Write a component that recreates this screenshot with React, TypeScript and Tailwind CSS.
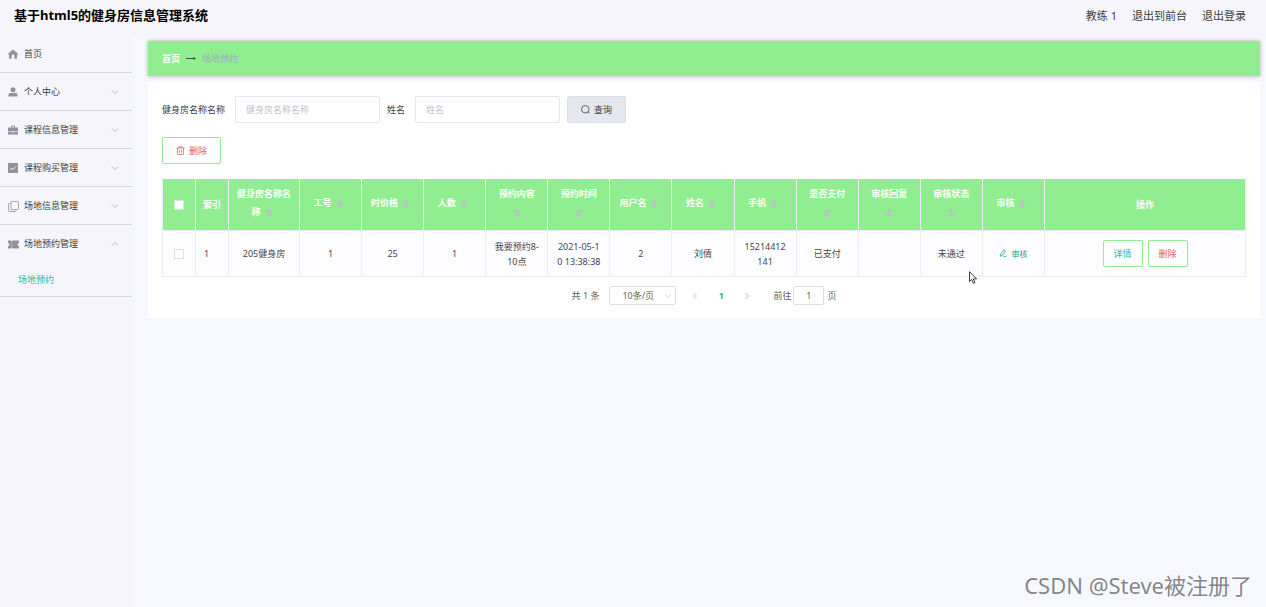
import type { ReactNode } from "react";

const menu = [
  { label: "首页", icon: <HomeIcon /> },
  { label: "个人中心", icon: <UserIcon />, arrow: "down" },
  { label: "课程信息管理", icon: <CaseIcon />, arrow: "down" },
  { label: "课程购买管理", icon: <ChartIcon />, arrow: "down" },
  { label: "场地信息管理", icon: <CopyIcon />, arrow: "down" },
  {
    label: "场地预约管理",
    icon: <TicketIcon />,
    arrow: "up",
    children: ["场地预约"],
  },
];

const columns = [
  "工号",
  "时价格",
  "人数",
  "预约内容",
  "预约时间",
  "用户名",
  "姓名",
  "手机",
  "是否支付",
  "审核回复",
  "审核状态",
  "审核",
];

const row = [
  "1",
  "25",
  "1",
  "我要预约8-10点",
  "2021-05-10 13:38:38",
  "2",
  "刘倩",
  "15214412141",
  "已支付",
  "",
  "未通过",
];

function HomeIcon() {
  return (
    <svg className="size-[10px]" viewBox="0 0 20 20" fill="currentColor">
      <path d="M10 1 0 9.500c0 1 .5 1.500 1.500 1.500H2v7.500c0 .6.4 1 1 1h4V14a3 3 0 0 1 6 0v5.500h4c.6 0 1-.4 1-1V11h.5c1 0 1.500-.5 1.500-1.500z" />
    </svg>
  );
}

function UserIcon() {
  return (
    <svg className="size-[10px]" viewBox="0 0 20 20" fill="currentColor">
      <circle cx="10" cy="5.500" r="5" />
      <path d="M1 19v-3.500c0-2.500 2-3.500 4-3.500h10c2 0 4 1 4 3.500V19z" />
    </svg>
  );
}

function CaseIcon() {
  return (
    <svg className="size-[10px]" viewBox="0 0 20 20" fill="currentColor">
      <path d="M6 5V3.500C6 2 7 1 8.500 1h3C13 1 14 2 14 3.500V5h6v7.500H0V5zm2 0h4V3H8z" />
      <path d="M0 13.500h8V15h4v-1.500h8V19H0z" />
    </svg>
  );
}

function ChartIcon() {
  return (
    <svg className="size-[10px]" viewBox="0 0 20 20">
      <rect width="20" height="20" rx="1" fill="currentColor" />
      <path d="m4 14 4-4 3 2.500L16 7" fill="none" stroke="#f5f5fb" strokeWidth="1.800" />
    </svg>
  );
}

function CopyIcon() {
  return (
    <svg
      className="size-[11px]"
      viewBox="0 0 22 22"
      fill="none"
      stroke="currentColor"
      strokeWidth="1.600"
    >
      <rect x="6" y="1" width="15" height="16" rx="2" />
      <path d="M6 5H3a2 2 0 0 0-2 2v12a2 2 0 0 0 2 2h11a2 2 0 0 0 2-2v-2" />
    </svg>
  );
}

function TicketIcon() {
  return (
    <svg className="h-[9px] w-[11px]" viewBox="0 0 22 18" fill="currentColor">
      <path d="M0 1h6l1.500 2L9 1h13v5a3 3 0 0 0 0 6v5H9l-1.500-2L6 17H0v-5a3 3 0 0 0 0-6z" />
      <path d="M7.500 5v2.500M7.500 10.500V13" stroke="#f5f5fb" strokeWidth="1.400" />
    </svg>
  );
}

function Chevron({ className }: { className: string }) {
  return (
    <svg
      className={`size-2 shrink-0 ${className}`}
      viewBox="0 0 16 16"
      fill="none"
      stroke="currentColor"
      strokeWidth="1.600"
    >
      <path d="m2 5 6 6 6-6" />
    </svg>
  );
}

function SortCaret() {
  return (
    <span className="inline-flex w-4 justify-center align-middle">
      <svg className="h-2 w-[6px]" viewBox="0 0 6 8" fill="#c3b9cf">
        <path d="M0 3.500 3 0l3 3.500zM0 4.500 3 8l3-3.500z" />
      </svg>
    </span>
  );
}

function TrashIcon() {
  return (
    <svg
      className="size-[9px]"
      viewBox="0 0 18 18"
      fill="none"
      stroke="currentColor"
      strokeWidth="1.500"
    >
      <path d="M1 4h16M6 4V1.500h6V4M3 4v13h12V4M7 7.500v6M11 7.500v6" />
    </svg>
  );
}

function SearchIcon() {
  return (
    <svg
      className="size-[9px]"
      viewBox="0 0 18 18"
      fill="none"
      stroke="currentColor"
      strokeWidth="1.500"
    >
      <circle cx="8.500" cy="8.500" r="7.500" />
      <path d="m13.500 13.500 3.500 3.500" />
    </svg>
  );
}

function EditIcon() {
  return (
    <svg
      className="size-2"
      viewBox="0 0 16 16"
      fill="none"
      stroke="currentColor"
      strokeWidth="1.500"
    >
      <path d="M3 10.500 9.500 1.500 13 4 6.500 13 2.500 14.500zM8 14.800h7" />
    </svg>
  );
}

function Th({
  children,
  className = "py-2 text-center",
}: {
  children: ReactNode;
  className?: string;
}) {
  return (
    <th
      className={`border-r border-b border-[#ebeef5] px-[7px] leading-[18px] font-bold break-all ${className}`}
    >
      {children}
    </th>
  );
}

function Td({ children, className = "text-center" }: { children?: ReactNode; className?: string }) {
  return (
    <td
      className={`h-[46px] border-r border-b border-[#ebeef5] px-2 leading-[15px] break-all ${className}`}
    >
      {children}
    </td>
  );
}

function Sidebar() {
  return (
    <nav className="w-[132px] shrink-0 bg-[#f5f5fb]">
      <ul>
        {menu.map((item) => (
          <li key={item.label} className="border-b border-[#d5d6dc]">
            <a href="#" className="flex h-[37px] items-center pr-[13px] pl-2">
              <span className="mt-px w-4 text-[#909399]">{item.icon}</span>
              <span className="flex-1">{item.label}</span>
              {item.arrow && (
                <Chevron
                  className={
                    item.arrow === "up" ? "rotate-180 text-[#a3a6ad]" : "text-[#a3a6ad]"
                  }
                />
              )}
            </a>
            {item.children?.map((child) => (
              <a key={child} href="#" className="flex h-[34px] items-center pl-[18px] text-[#2bb8a3]">
                {child}
              </a>
            ))}
          </li>
        ))}
      </ul>
    </nav>
  );
}

function RecordTable() {
  return (
    <table className="mt-[15px] w-full table-fixed border-separate border-spacing-0 border-l border-[#ebeef5]">
      <colgroup>
        <col className="w-[33px]" />
        <col className="w-[33px]" />
        <col className="w-[71px]" />
        {columns.map((name) => (
          <col key={name} />
        ))}
        <col className="w-[201px]" />
      </colgroup>
      <thead className="bg-[#90ee90] text-white">
        <tr className="h-[52px]">
          <Th>
            <input
              type="checkbox"
              aria-label="全选"
              className="mx-auto block size-[10px] appearance-none border border-[#dcdfe6] bg-white"
            />
          </Th>
          <Th className="py-2 text-left">索引</Th>
          <Th className="pt-[5px] pb-2 text-center">
            健身房名称名称
            <SortCaret />
          </Th>
          {columns.map((name) => (
            <Th key={name} className="pt-[5px] pb-2 text-center">
              {name}
              <SortCaret />
            </Th>
          ))}
          <Th>操作</Th>
        </tr>
      </thead>
      <tbody className="bg-[#fdfdff] text-[#454648]">
        <tr>
          <Td>
            <input
              type="checkbox"
              aria-label="选择"
              className="mx-auto block size-[10px] appearance-none border border-[#dcdfe6] bg-white"
            />
          </Td>
          <Td className="text-left">1</Td>
          <Td>205健身房</Td>
          {row.map((value, i) => (
            <Td key={i}>{value}</Td>
          ))}
          <Td>
            <button className="inline-flex items-center gap-1 text-[8px] text-[#1aa58c]">
              <EditIcon />
              审核
            </button>
          </Td>
          <Td>
            <div className="flex justify-center gap-[5px]">
              <button className="h-[27px] w-10 rounded-xs border border-[#90ee90] bg-white text-[#35b3b3]">
                详情
              </button>
              <button className="h-[27px] w-10 rounded-xs border border-[#90ee90] bg-white text-[#e25c5c]">
                删除
              </button>
            </div>
          </Td>
        </tr>
      </tbody>
    </table>
  );
}

function Pagination() {
  return (
    <div className="mt-[9px] flex h-[19px] items-center justify-center text-[#606266]">
      <span>共 1 条</span>
      <div className="relative ml-[10px]">
        <select
          aria-label="每页条数"
          className="block h-[19px] w-[67px] appearance-none rounded-xs border border-[#dcdfe6] bg-white pl-3"
        >
          <option>10条/页</option>
        </select>
        <Chevron className="absolute top-[6px] right-1 text-[#c0c4cc]" />
      </div>
      <button aria-label="上一页" className="ml-[15px] text-[#a8abb2]">
        <Chevron className="rotate-90" />
      </button>
      <button className="w-11 font-bold text-[#15b8a0]">1</button>
      <button aria-label="下一页" className="text-[#a8abb2]">
        <Chevron className="-rotate-90" />
      </button>
      <label className="ml-[22px] flex items-center gap-[2px]">
        前往
        <input
          defaultValue="1"
          className="h-[19px] w-[31px] rounded-xs border border-[#dcdfe6] bg-white text-center"
        />
      </label>
      <span className="ml-[3px]">页</span>
    </div>
  );
}

export default function App() {
  return (
    <div className="relative flex min-h-screen flex-col overflow-hidden bg-[#f7f8fd] font-['Noto_Sans','Noto_Sans_CJK_SC',sans-serif] text-[9px] leading-[15px] text-[#3c3d40]">
      <header className="flex h-[35px] items-center justify-between bg-[#f5f5fb] pr-5 pb-1 pl-[14px]">
        <h1 className="text-[13px] font-bold text-black">基于html5的健身房信息管理系统</h1>
        <div className="flex gap-[15px] text-[11px]">
          <span>教练 1</span>
          <a href="#">退出到前台</a>
          <a href="#">退出登录</a>
        </div>
      </header>

      <div className="flex flex-1">
        <Sidebar />
        <main className="min-w-0 flex-1 pt-[6px] pr-[6px] pl-4">
          <div className="flex h-[35px] items-center gap-[6px] bg-[#90ee90] px-[14px] shadow-[0_0_4px_rgba(0,0,0,0.3)]">
            <a href="#" className="font-bold text-white">
              首页
            </a>
            <svg
              className="h-[5px] w-[10px]"
              viewBox="0 0 20 10"
              fill="none"
              stroke="#303133"
              strokeWidth="1.600"
            >
              <path d="M0 5h18M15 2l3 3-3 3" />
            </svg>
            <span className="text-[#a0a9bd]">场地预约</span>
          </div>

          <section className="mt-[6px] bg-white px-[14px] pt-[14px] pb-[13px]">
            <form className="flex items-center">
              <label htmlFor="gym" className="mr-[10px]">
                健身房名称名称
              </label>
              <input
                id="gym"
                placeholder="健身房名称名称"
                className="mr-[7px] h-[27px] w-[145px] rounded-xs border border-[#e4e7ed] bg-white px-[10px] placeholder:text-[#c0c4cc]"
              />
              <label htmlFor="person" className="mr-[10px]">
                姓名
              </label>
              <input
                id="person"
                placeholder="姓名"
                className="mr-[7px] h-[27px] w-[145px] rounded-xs border border-[#e4e7ed] bg-white px-[10px] placeholder:text-[#c0c4cc]"
              />
              <button
                type="button"
                className="flex h-[27px] w-[59px] items-center justify-center gap-1 rounded-xs border border-[#dcdfe6] bg-[#e4e7ed]"
              >
                <SearchIcon />
                查询
              </button>
            </form>
            <button className="mt-[14px] flex h-[27px] w-[59px] items-center justify-center gap-1 rounded-xs border border-[#90ee90] bg-white text-[#e25c5c]">
              <TrashIcon />
              删除
            </button>
            <RecordTable />
            <Pagination />
          </section>
        </main>
      </div>

      <div className="absolute right-[14px] bottom-[9px] text-[22px] leading-[26px] text-[#85868a] [text-shadow:-1px_-1px_0_#fff]">
        CSDN @Steve被注册了
      </div>
      <svg className="absolute top-[271px] left-[969px] h-[13px] w-[9px]" viewBox="0 0 9 13">
        <path
          d="M.5.7v9.800l2.300-2.100 1.500 3.900 1.700-.7-1.600-3.700h3.200z"
          fill="#fff"
          stroke="#222"
          strokeWidth=".9"
        />
      </svg>
    </div>
  );
}
